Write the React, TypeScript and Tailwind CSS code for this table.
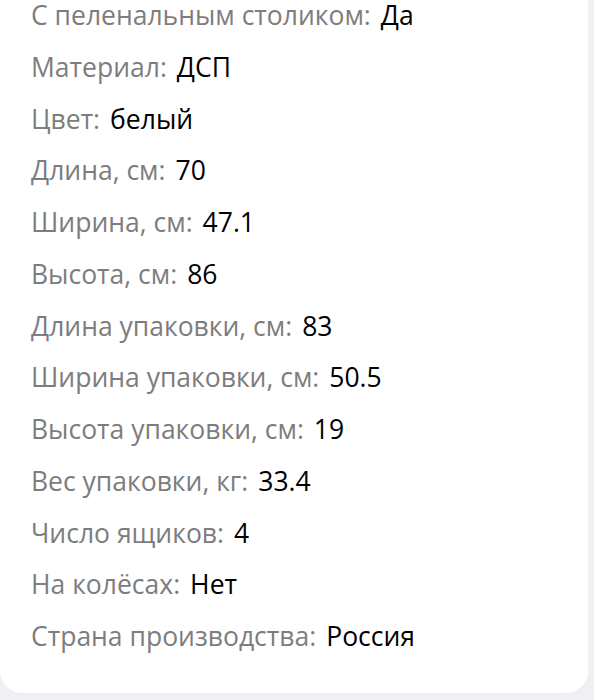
const specs: [string, string][] = [
  ['С пеленальным столиком', 'Да'],
  ['Материал', 'ДСП'],
  ['Цвет', 'белый'],
  ['Длина, см', '70'],
  ['Ширина, см', '47.1'],
  ['Высота, см', '86'],
  ['Длина упаковки, см', '83'],
  ['Ширина упаковки, см', '50.5'],
  ['Высота упаковки, см', '19'],
  ['Вес упаковки, кг', '33.4'],
  ['Число ящиков', '4'],
  ['На колёсах', 'Нет'],
  ['Страна производства', 'Россия'],
]

export default function App() {
  return (
    <div className="w-[594px] h-[700px] overflow-hidden bg-[#eef0f3]" style={{ fontFamily: '"Open Sans", "Noto Sans", sans-serif' }}>
      <div className="mr-[6px] bg-white rounded-b-[22px] pl-[31px] pb-[42px] flex flex-col gap-[21.75px]">
        {specs.map(([label, value]) => (
          <div key={label} className="h-[30px] leading-[30px] text-[26.5px] whitespace-nowrap">
            <span className="text-[#7d7d7d]">{label}:</span>
            <span className="text-black ml-[10px]">{value}</span>
          </div>
        ))}
      </div>
    </div>
  )
}
